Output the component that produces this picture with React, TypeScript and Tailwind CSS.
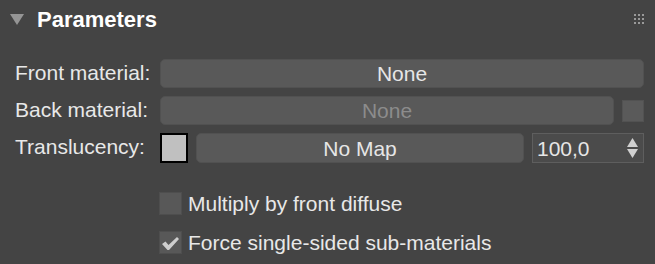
import React from 'react';

function Grip() {
  return (
    <div className="grid grid-cols-3 gap-[2px]">
      {Array.from({ length: 9 }).map((_, i) => (
        <div key={i} className="w-[2px] h-[2px] bg-[#9a9a9a]" />
      ))}
    </div>
  );
}

function CheckRow({ label, checked }: { label: string; checked?: boolean }) {
  return (
    <div className="flex items-center h-[23px]">
      <div className="w-[23px] h-[23px] bg-[#585858] border border-[#4e4e4e] flex items-center justify-center">
        {checked && (
          <svg width="17" height="13" viewBox="0 0 17 13" className="mt-[1px]">
            <polygon points="0,7 3.5,4.5 6.5,8 15,0 17,2 7,13 5.5,13" fill="#cecece" />
          </svg>
        )}
      </div>
      <span className="ml-[6px] text-[#e8e8e8] leading-none">{label}</span>
    </div>
  );
}

export default function App() {
  return (
    <div className="w-[655px] h-[264px] bg-[#444444] text-[21px] font-['Liberation_Sans',Arial,sans-serif] overflow-hidden select-none">
      <div className="flex items-center h-[38px] pl-[10px] pr-[11px]">
        <svg width="14" height="11" viewBox="0 0 14 11">
          <polygon points="0,0 14,0 7,11" fill="#959595" />
        </svg>
        <span className="ml-[13px] text-[22px] font-bold text-white">Parameters</span>
        <div className="ml-auto">
          <Grip />
        </div>
      </div>

      <div className="pl-[15px] pr-[11px] pt-[21px]">
        <div className="flex items-center h-[29px]">
          <span className="w-[145px] text-[#e8e8e8] leading-none -mt-[3px] whitespace-nowrap overflow-hidden">Front material:</span>
          <button className="flex-1 h-[29px] rounded-[5px] bg-[#595959] border border-[#515151] text-[#e6e6e6] leading-none">
            None
          </button>
        </div>

        <div className="flex items-center h-[29px] mt-[8px]">
          <span className="w-[145px] text-[#e8e8e8] leading-none -mt-[3px]">Back material:</span>
          <button className="flex-1 h-[29px] rounded-[5px] bg-[#595959] border border-[#515151] text-[#8c8c8c] leading-none">
            None
          </button>
          <div className="ml-[8px] w-[22px] h-[22px] bg-[#5a5a5a] border border-[#525252]" />
        </div>

        <div className="flex items-center h-[30px] mt-[8px]">
          <span className="w-[145px] text-[#e8e8e8] leading-none -mt-[3px]">Translucency:</span>
          <div className="w-[28px] h-[30px] border-2 border-black bg-[#c0c0c0]" />
          <button className="ml-[8px] w-[328px] h-[30px] rounded-[5px] bg-[#595959] border border-[#515151] text-[#e6e6e6] leading-none">
            No Map
          </button>
          <div className="ml-[8px] flex-1 h-[30px] bg-[#4b4b4b] border border-[#5e5e5e] flex items-center pl-[4px] pr-[5px]">
            <span className="text-[#e6e6e6] leading-none">100,0</span>
            <div className="ml-auto flex flex-col gap-[2px]">
              <svg width="11" height="9" viewBox="0 0 11 9">
                <polygon points="5.5,0 11,9 0,9" fill="#d0d0d0" />
              </svg>
              <svg width="11" height="9" viewBox="0 0 11 9">
                <polygon points="0,0 11,0 5.5,9" fill="#d0d0d0" />
              </svg>
            </div>
          </div>
        </div>

        <div className="pl-[144px] mt-[29px] flex flex-col gap-[16px]">
          <CheckRow label="Multiply by front diffuse" />
          <CheckRow label="Force single-sided sub-materials" checked />
        </div>
      </div>
    </div>
  );
}
